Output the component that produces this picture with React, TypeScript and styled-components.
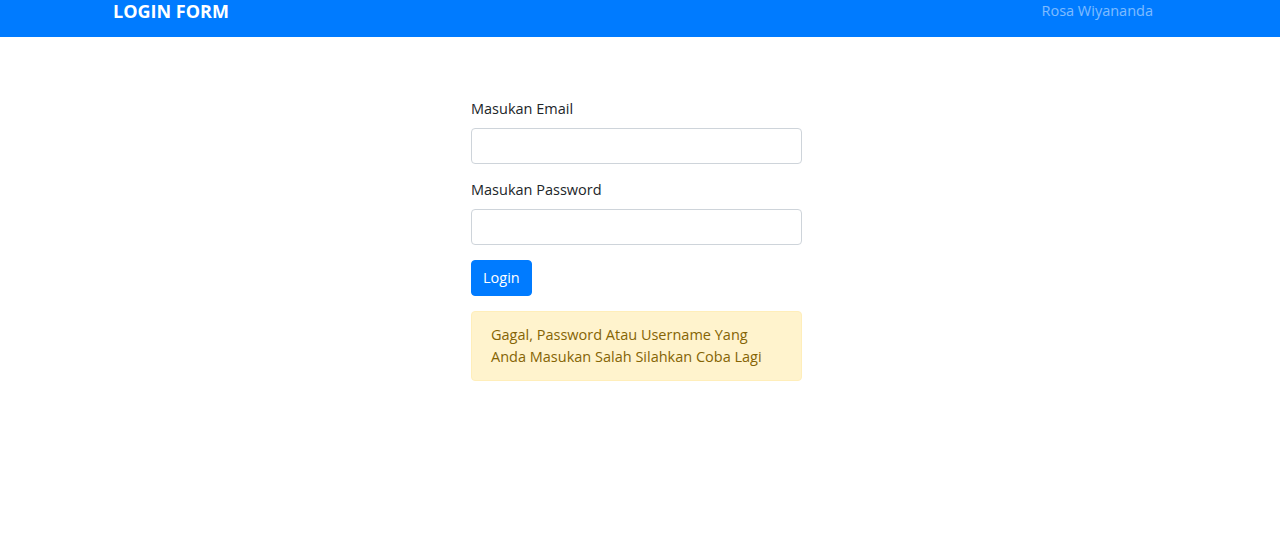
import styled, { createGlobalStyle } from "styled-components";

const GlobalStyle = createGlobalStyle`
  body {
    margin: 0;
    background: #fff;
    font-family: "Open Sans", "Noto Sans", "Liberation Sans", sans-serif;
    font-size: 15px;
    line-height: 22.5px;
    color: #212529;
  }
  * {
    box-sizing: border-box;
  }
`;

const Navbar = styled.nav`
  height: 37px;
  background-color: #007bff;
  display: flex;
  justify-content: space-between;
  align-items: flex-start;
  padding: 0 127px 0 113px;
`;

const Brand = styled.div`
  color: #fff;
  font-size: 18px;
  font-weight: 700;
  line-height: 22px;
`;

const NavLink = styled.div`
  color: rgba(255, 255, 255, 0.5);
  font-size: 14.5px;
  line-height: 22px;
`;

const Main = styled.main`
  padding: 61px 0 0 471px;
`;

const Form = styled.form`
  width: 331px;
  display: flex;
  flex-direction: column;
`;

const FormGroup = styled.div`
  display: flex;
  flex-direction: column;
  margin-bottom: 15px;
`;

const Label = styled.label`
  font-size: 14.5px;
  margin-bottom: 7.5px;
`;

const Input = styled.input`
  height: 36px;
  border: 1px solid #ced4da;
  border-radius: 4px;
  padding: 6px 12px;
  font: inherit;
  outline: none;
`;

const Button = styled.button`
  align-self: flex-start;
  height: 36px;
  padding: 0 11px;
  border: 1px solid #007bff;
  border-radius: 4px;
  background-color: #007bff;
  color: #fff;
  font: inherit;
  font-size: 14.5px;
  cursor: pointer;
`;

const Alert = styled.div`
  margin-top: 15px;
  padding: 11.5px 19px;
  background-color: #fff3cd;
  border: 1px solid #ffeeba;
  border-radius: 4px;
  color: #856404;
  font-size: 14.5px;
`;

const App = () => {
  return (
    <>
      <GlobalStyle />
      <Navbar>
        <Brand>LOGIN FORM</Brand>
        <NavLink>Rosa Wiyananda</NavLink>
      </Navbar>
      <Main>
        <Form onSubmit={(e) => e.preventDefault()}>
          <FormGroup>
            <Label>Masukan Email</Label>
            <Input type="email" />
          </FormGroup>
          <FormGroup>
            <Label>Masukan Password</Label>
            <Input type="password" />
          </FormGroup>
          <Button type="submit">Login</Button>
          <Alert>
            Gagal, Password Atau Username Yang
            <br />
            Anda Masukan Salah Silahkan Coba Lagi
          </Alert>
        </Form>
      </Main>
    </>
  );
};

export default App;
